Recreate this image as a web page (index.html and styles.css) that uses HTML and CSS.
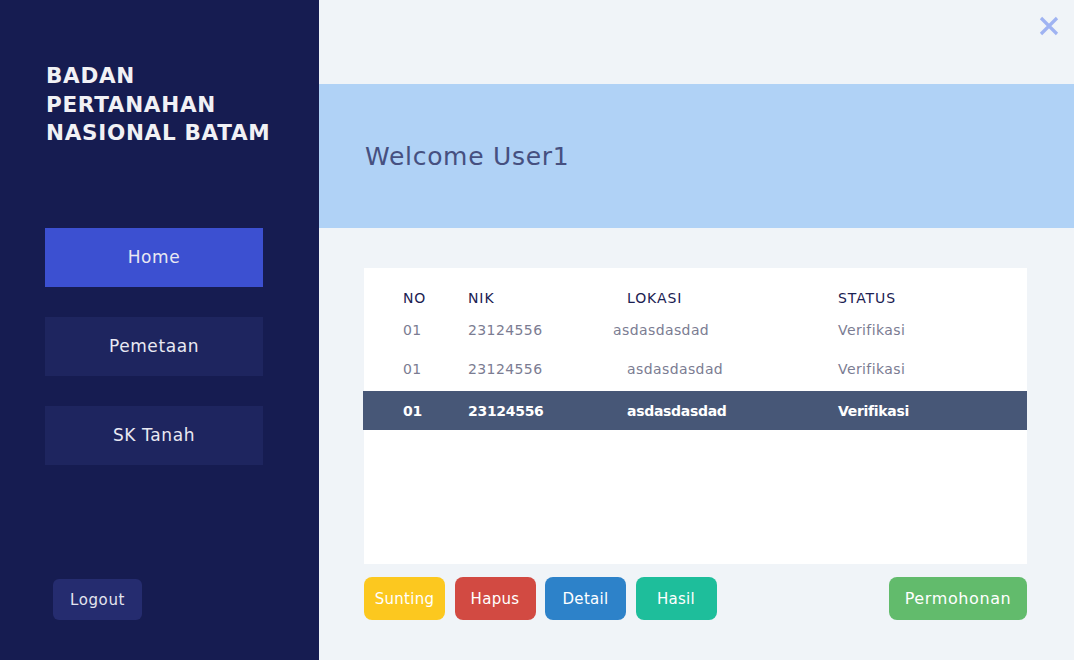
FILE: index.html
```html
<!DOCTYPE html>
<html>
<head>
<meta charset="utf-8">
<link rel="stylesheet" href="styles.css">
</head>
<body>
<div class="app">
  <aside class="sidebar">
    <h1 class="brand">BADAN<br>PERTANAHAN<br>NASIONAL BATAM</h1>
    <nav class="nav">
      <a class="nav-item active">Home</a>
      <a class="nav-item">Pemetaan</a>
      <a class="nav-item">SK Tanah</a>
    </nav>
    <button class="logout">Logout</button>
  </aside>
  <main class="main">
    <div class="topbar">
      <svg class="close" width="20" height="20" viewBox="0 0 20 20"><path d="M2 2L18 18M18 2L2 18" stroke="#9fb3f2" stroke-width="3.2" stroke-linecap="butt"/></svg>
    </div>
    <section class="banner">
      <h2 class="welcome">Welcome User1</h2>
    </section>
    <section class="content">
      <div class="card">
        <div class="row head"><span>NO</span><span>NIK</span><span>LOKASI</span><span>STATUS</span></div>
        <div class="row r1"><span>01</span><span>23124556</span><span class="shift">asdasdasdad</span><span>Verifikasi</span></div>
        <div class="row r2"><span>01</span><span>23124556</span><span>asdasdasdad</span><span>Verifikasi</span></div>
        <div class="row selected"><span>01</span><span>23124556</span><span>asdasdasdad</span><span>Verifikasi</span></div>
      </div>
      <div class="actions">
        <button class="btn yellow">Sunting</button>
        <button class="btn red">Hapus</button>
        <button class="btn blue">Detail</button>
        <button class="btn teal">Hasil</button>
        <button class="btn green wide">Permohonan</button>
      </div>
    </section>
  </main>
</div>
</body>
</html>
```
FILE: styles.css
```css
* { box-sizing: border-box; }
html, body { margin: 0; padding: 0; }
body {
  font-family: "DejaVu Sans", "Noto Sans", sans-serif;
  width: 1074px;
  height: 660px;
  overflow: hidden;
}
.app { display: flex; height: 660px; }
.sidebar {
  width: 319px;
  flex: none;
  background: #161c51;
  padding: 62px 40px 40px 45px;
  display: flex;
  flex-direction: column;
}
.brand {
  margin: 0 0 0 1px;
  color: #f1f1f5;
  font-size: 21.5px;
  line-height: 28.5px;
  font-weight: bold;
  letter-spacing: 0.7px;
  white-space: nowrap;
}
.nav {
  margin-top: 80px;
  display: flex;
  flex-direction: column;
  gap: 30px;
}
.nav-item {
  height: 59px;
  width: 218px;
  display: flex;
  align-items: center;
  justify-content: center;
  background: #1e255f;
  color: #e9e9f2;
  font-size: 17px;
  letter-spacing: 0.6px;
}
.nav-item.active { background: #3c50d1; }
.logout {
  margin-top: auto;
  margin-left: 8px;
  width: 89px;
  height: 41px;
  background: #252c6f;
  color: #e4e5f0;
  border: none;
  border-radius: 6px;
  font-family: inherit;
  font-size: 15px;
  letter-spacing: 0.6px;
}
.main {
  flex: 1;
  background: #f0f4f8;
  display: flex;
  flex-direction: column;
}
.topbar {
  height: 84px;
  display: flex;
  justify-content: flex-end;
  align-items: flex-start;
  padding: 16px 15px 0 0;
}
.banner {
  height: 144px;
  background: #b0d2f6;
  display: flex;
  align-items: center;
  padding-left: 46px;
}
.welcome {
  margin: 0;
  font-weight: normal;
  font-size: 25px;
  letter-spacing: 0.7px;
  color: #465080;
}
.content {
  padding: 40px 47px 0 45px;
}
.card {
  background: #ffffff;
  height: 296px;
  padding-top: 15px;
}
.row {
  display: grid;
  grid-template-columns: 65px 159px 211px 1fr;
  padding-left: 39px;
  align-items: center;
  font-size: 14px;
  letter-spacing: 0.4px;
  color: #7b7c92;
}
.row.head { height: 30px; color: #1b2152; font-size: 14px; letter-spacing: 0.9px; }
.row.r1 { height: 34px; }
.row.r1 .shift { margin-left: -14px; }
.row.r2 { height: 44px; }
.row.selected {
  height: 39px;
  background: #475777;
  color: #ffffff;
  font-weight: bold;
  letter-spacing: -0.3px;
  margin-left: -1px;
  padding-left: 40px;
}
.actions {
  margin-top: 13px;
  display: flex;
  gap: 9.5px;
}
.btn {
  width: 81px;
  height: 43px;
  border: none;
  border-radius: 8px;
  color: #ffffff;
  font-family: inherit;
  font-size: 15px;
  letter-spacing: 0.3px;
}
.btn.yellow { background: #fcc81f; }
.btn.red { background: #d24a42; }
.btn.blue { background: #2d82c9; }
.btn.teal { background: #1ebe9b; }
.btn.green { background: #62bb6c; font-size: 16px; letter-spacing: 0.6px; }
.btn.wide { width: 138px; margin-left: auto; }
```
